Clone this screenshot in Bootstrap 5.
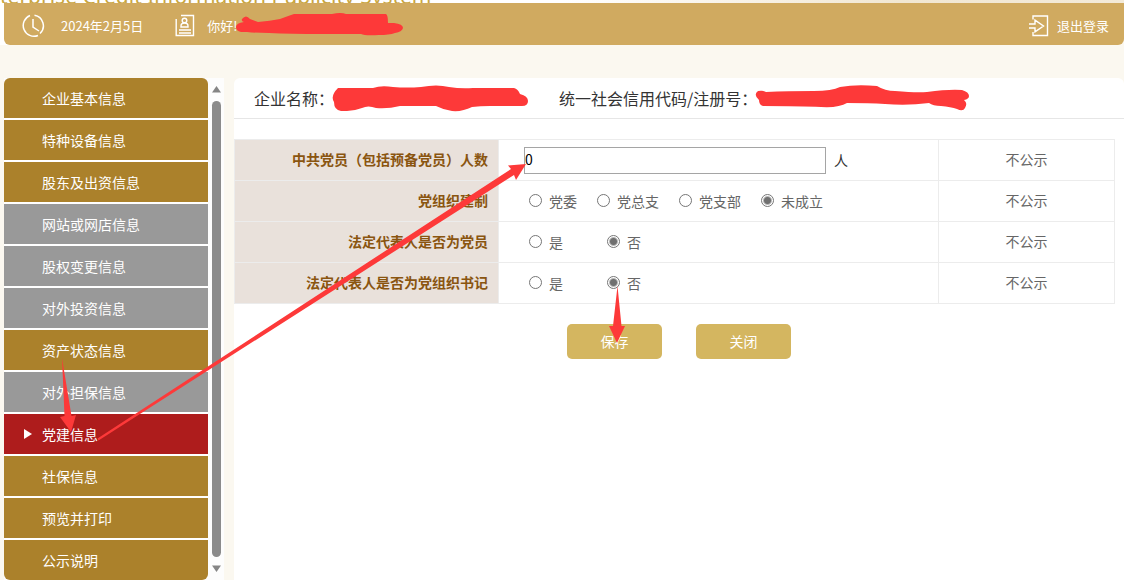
<!DOCTYPE html>
<html lang="zh-CN">
<head>
<meta charset="utf-8">
<meta name="viewport" content="width=device-width, initial-scale=1">
<title>党建信息</title>
<link href="https://cdn.jsdelivr.net/npm/bootstrap@5.3.0/dist/css/bootstrap.min.css" rel="stylesheet">
<style>
body { background: #fbf8f0; font: 14px/20px "Noto Sans CJK SC", sans-serif; color: #333; overflow: hidden; }
.banner { height: 3px; background: linear-gradient(90deg, #fff 50%, #f1e7d2 80%, #f3ead8); color: #c9a63f; font: 21px/14px "Noto Sans", sans-serif; white-space: nowrap; }
.top-wrap { background: linear-gradient(90deg, #fff 50%, #fbf8f0 50%); }
.topbar { height: 42px; background: #d0aa60; color: #fff; border-radius: 0 0 6px 6px; font-size: 13px; padding: 3px 15px 0 17px; }
.topbar a { color: #fff; }
.topbar .user-icon { margin-left: 32px; }
.page-row { margin-top: 33px; }
.side { width: 220px; background: #fdfdfd; }
.menu { gap: 2px; border-radius: 6px; overflow: hidden; width: 204px; background: #fff; }
.menu a { height: 40px; padding-left: 38px; background: #ab812b; color: #fff; }
.menu a.off { background: #999; }
.menu a.now { background: #ae1c1c; padding-left: 20px; gap: 10px; }
.bar { width: 9px; margin-left: 4px; padding: 8px 0; gap: 8px; }
.thumb { background: #8b8b8b; border-radius: 5px; }
.panel { background: #fff; border-radius: 6px 6px 0 0; margin-left: 10px; }
.panel-head { height: 41px; border-bottom: 1px solid #e6e6e6; font-size: 16px; padding-left: 20px; }
.company { width: 305px; }
.form-grid { width: calc(100% - 9px); margin-top: 20px; table-layout: fixed; border-collapse: collapse; }
.form-grid th, .form-grid td { border: 1px solid #ececec; height: 41px; padding: 0 10px 2px; }
.form-grid th { background: #e9e1db; color: #8a5510; text-align: right; width: 264px; }
.form-grid td.field { padding: 0 0 0 25px; }
.form-grid td.state { width: 176px; text-align: center; color: #666; }
.num { width: 302px; height: 27px; border: 1px solid #a5a5a5; padding: 0 0 2px; font-size: 14px; color: #000; }
.opts { gap: 20px; padding-left: 5px; color: #666; }
.opts.wide { gap: 44px; }
.opts label { gap: 7px; }
.opts input { appearance: none; width: 13px; height: 13px; border: 1px solid #767676; border-radius: 50%; background: #fff; margin: 0 0 2px; }
.opts input:checked { background: radial-gradient(circle, #707070 3px, #fff 5px); }
.actions { gap: 34px; margin: 20px 0 0 333px; }
.act { width: 95px; height: 35px; background: #d4b660; color: #fff; border: 0; border-radius: 5px; padding: 0 0 2px; }
.marks { left: 0; top: 0; pointer-events: none; fill: #fd3939; }
</style>
</head>
<body>
<div class="banner overflow-hidden d-flex align-items-end"><span class="banner-text">terprise Credit Information Publicity System</span></div>
<div class="top-wrap ps-1">
  <header class="topbar d-flex align-items-center">
    <svg width="24" height="24" viewBox="0 0 24 24" fill="none" stroke="#fff" stroke-width="1.5"><path d="M9 1.500A10.600 10.600 0 1 0 17 21.500M19 19.500A10.600 10.600 0 0 0 13.500 1.300M12 5v8l6 4"/></svg>
    <span class="date-text ms-3">2024年2月5日</span>
    <svg class="user-icon" width="20" height="24" viewBox="0 0 20 24" fill="none" stroke="#fff" stroke-width="1.400"><path d="M6 1.500h12.500v20H1.200V5M4 16h12M4 19h12"/><circle cx="9.500" cy="6.500" r="2.300"/><path d="M6 13v-1q0-3 3.500-3t3.500 3v1z"/></svg>
    <span class="ms-2 ps-1">你好!</span>
    <svg class="ms-auto flex-shrink-0 me-2" width="20" height="24" viewBox="0 0 20 24" fill="none" stroke="#fff" stroke-width="1.400"><path d="M4 5.500V2h14.500v19.500H4V18M0 10h6V6.200l8.500 5.800L6 17.800V14H0"/></svg>
    <a class="text-decoration-none" href="#">退出登录</a>
  </header>
</div>
<div class="page-row d-flex ps-1">
  <aside class="side d-flex flex-shrink-0">
    <nav class="menu d-flex flex-column">
      <a class="d-flex align-items-center text-decoration-none" href="#">企业基本信息</a>
      <a class="d-flex align-items-center text-decoration-none" href="#">特种设备信息</a>
      <a class="d-flex align-items-center text-decoration-none" href="#">股东及出资信息</a>
      <a class="off d-flex align-items-center text-decoration-none" href="#">网站或网店信息</a>
      <a class="off d-flex align-items-center text-decoration-none" href="#">股权变更信息</a>
      <a class="off d-flex align-items-center text-decoration-none" href="#">对外投资信息</a>
      <a class="d-flex align-items-center text-decoration-none" href="#">资产状态信息</a>
      <a class="off d-flex align-items-center text-decoration-none" href="#">对外担保信息</a>
      <a class="now d-flex align-items-center text-decoration-none" href="#" aria-current="page"><svg width="8" height="10" viewBox="0 0 8 10" fill="#fff"><path d="M0 0l8 5-8 5z"/></svg>党建信息</a>
      <a class="d-flex align-items-center text-decoration-none" href="#">社保信息</a>
      <a class="d-flex align-items-center text-decoration-none" href="#">预览并打印</a>
      <a class="d-flex align-items-center text-decoration-none" href="#">公示说明</a>
    </nav>
    <div class="bar d-flex flex-column">
      <svg width="9" height="7" viewBox="0 0 9 7" fill="#858585"><path d="M4.500 0L9 6.500H0z"/></svg>
      <div class="thumb flex-grow-1"></div>
      <svg width="9" height="7" viewBox="0 0 9 7" fill="#858585"><path d="M0 .5h9L4.500 7z"/></svg>
    </div>
  </aside>
  <main class="panel flex-grow-1">
    <div class="panel-head d-flex align-items-center">
      <span class="company">企业名称：</span><span>统一社会信用代码/注册号：</span>
    </div>
    <form onsubmit="return false">
      <table class="form-grid">
        <tr><th scope="row"><label for="members">中共党员（包括预备党员）人数</label></th>
          <td class="field"><div class="d-flex align-items-center gap-2"><input class="num" id="members" type="text" value="0"><span>人</span></div></td>
          <td class="state">不公示</td></tr>
        <tr><th scope="row">党组织建制</th>
          <td class="field"><div class="opts d-flex">
            <label class="d-flex align-items-center"><input type="radio" name="org">党委</label>
            <label class="d-flex align-items-center"><input type="radio" name="org">党总支</label>
            <label class="d-flex align-items-center"><input type="radio" name="org">党支部</label>
            <label class="d-flex align-items-center"><input type="radio" name="org" checked>未成立</label></div></td>
          <td class="state">不公示</td></tr>
        <tr><th scope="row">法定代表人是否为党员</th>
          <td class="field"><div class="opts wide d-flex">
            <label class="d-flex align-items-center"><input type="radio" name="member">是</label>
            <label class="d-flex align-items-center"><input type="radio" name="member" checked>否</label></div></td>
          <td class="state">不公示</td></tr>
        <tr><th scope="row">法定代表人是否为党组织书记</th>
          <td class="field"><div class="opts wide d-flex">
            <label class="d-flex align-items-center"><input type="radio" name="sec">是</label>
            <label class="d-flex align-items-center"><input type="radio" name="sec" checked>否</label></div></td>
          <td class="state">不公示</td></tr>
      </table>
      <div class="actions d-flex">
        <button class="act" type="submit">保存</button>
        <button class="act" type="button">关闭</button>
      </div>
    </form>
  </main>
</div>
<svg class="marks position-absolute" width="1124" height="580" viewBox="0 0 1124 580" aria-hidden="true">
  <path d="M62 358L71.500 416L76 415L71 432L60 417L64.500 416Z"/>
  <path d="M97.500 438.500L511 169L508 165.500L526 164L516 180L514 175L98.500 440.500Z"/>
  <path d="M617.500 286L621.500 326L625 326L617 343L609 326L613 326Z"/>
  <path d="M242 19q4-5 8 0l8 3q12-1 22-3 8-3 14-5h38q9-2 14 0h40q2 1 2 9h6q9 1 9 5-1 4-8 5-6 2-16 2-14 1-18-1h-40q-30 0-52-1-12 0-22-1h-6q-5-1-5-5 0-4 8-5-3-1-2-3z"/>
  <path d="M338 88h35q8-3 20-1 14 1 28 0 16-3 28 0 12 2 24 1h41q4 1 6 6 8 2 8 7 0 5-6 5h-32q-10 0-18 1-10 5-20 4-8-1-16-5-18 0-36 0-12 3-24 2-8-3-14 0-8 3-15 3h-6q-7-1-7-9-4-6 4-14z"/>
  <path d="M758 91q5-1 8 1 22-1 48-1 18 0 26-4 16-3 37-1 8 5 18 5 22 2 32 1 22-3 35-2 7 2 7 6 0 3-5 4 4 3 1 8-2 4-8 1-6-2-16-3-8 0-12-3-22 3-44 1-16-1-38-1-8 5-26 4-20-1-58-1-4-1-4-6-6-5-1-9z"/>
</svg>
</body>
</html>
